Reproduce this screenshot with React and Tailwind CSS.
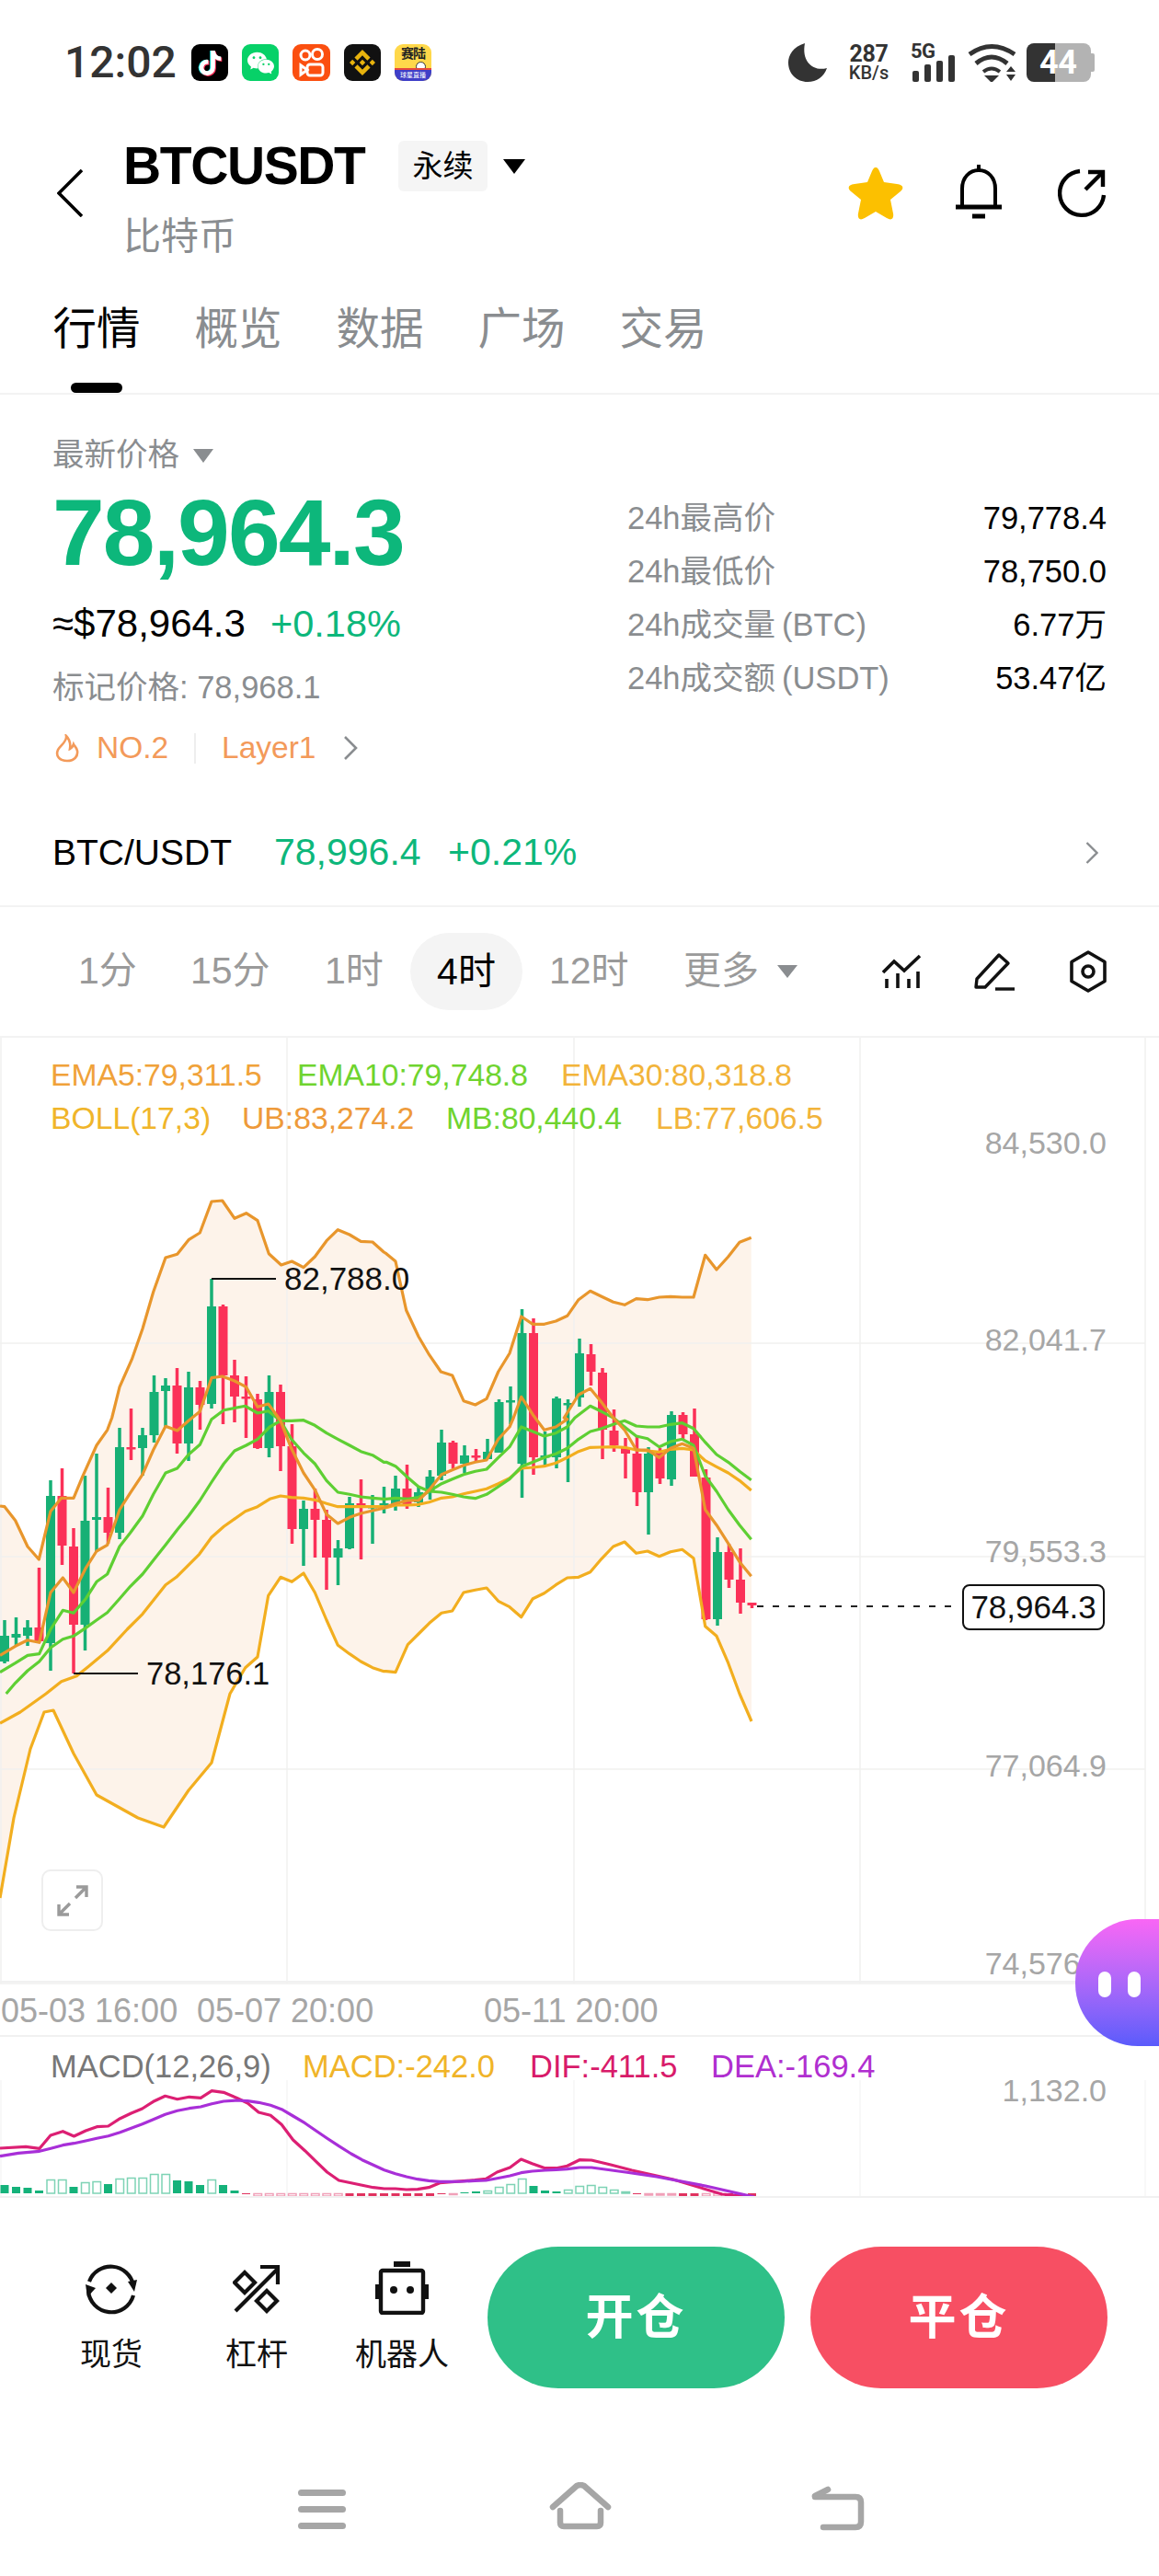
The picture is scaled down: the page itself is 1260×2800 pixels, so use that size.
import React from 'react';
import { SiWechat, SiBinance } from 'react-icons/si';
import { FaTiktok } from 'react-icons/fa';

const pts = (ox, oy, a) => { const r = []; for (let i = 0; i < a.length; i += 2) r.push([ox + a[i] / 3, oy + a[i + 1] / 3]); return r; };
const Z5 = a => pts(0, 1240, a), Z6 = a => pts(420, 1240, a), Z7 = a => pts(0, 1540, a), Z8 = a => pts(420, 1540, a);
const P = a => a.map(p => p[0].toFixed(1) + ',' + p[1].toFixed(1)).join(' ');

const UB = [
  ...Z7([0,288,15,290,50,335,90,420,127,462,165,305,200,262,240,262,270,190,315,90,350,40,365,0]),
  ...Z5([390,800,430,710,465,610,500,490,540,378,578,367,615,320,652,297,690,195,725,192,765,250,803,233,840,257,877,365,917,402,952,390,990,410,1027,375,1065,323,1102,287,1140,303,1177,325,1215,327,1252,360]),
  ...Z6([0,365,30,390,65,550,105,635,140,695,178,750,215,762,252,845,290,858,327,838,365,750,402,690,440,570,478,595,515,595,553,585,590,568,627,515,665,487,702,505,740,523,777,532,815,512,852,515,890,507,927,505,965,507,1002,507,1040,370,1077,417,1115,375,1152,328,1190,313]),
];
const LB = [
  [0,2062],[15,1975],[33,1900],[48,1860],[58,1858],[80,1905],[105,1950],[150,1975],[178,1985],[205,1945],[230,1915],
  ...Z7([750,900,800,815,840,780,875,580,915,520,952,535,990,507,1027,570,1065,660,1102,742,1140,770,1177,795,1215,815,1252,827]),
  ...Z8([0,827,30,830,70,740,105,705,140,670,180,637,215,630,252,570,290,562,327,555,365,598,402,617,440,650,478,590,515,572,553,545,590,522,627,520,665,503,702,460,740,420,777,405,815,442,852,435,890,452,927,437,965,430,1002,458,1040,680,1077,712,1115,800]),
  [804,1840],[817,1870],
];
const EMA30 = [
  [0,1872],[22,1860],
  ...Z7([150,900,200,860,250,842,290,810,350,760,415,690,465,640,540,545,575,520,650,445,690,390,730,355,800,305,840,290,880,265,915,255,950,260,990,262,1027,268,1065,280,1102,290,1140,290,1215,290,1252,290]),
  ...Z8([0,293,30,285,70,285,105,283,140,275,180,262,215,258,252,248,290,240,327,232,365,215,402,197,440,165,478,162,515,158,553,148,590,130,627,110,665,97,702,96,740,95,777,97,815,105,852,108,890,112,927,103,965,100,1002,105,1040,140,1077,160,1115,180,1152,205,1190,237]),
];
const G1 = [
  ...Z7([0,830,50,800,90,775,128,770,165,690,205,628,240,637,280,590,315,535,350,510,390,420,425,375,465,320,500,250,540,180,578,165,615,120,652,88,690,5]),
  ...Z5([730,875,800,862,840,885,875,878]),
  ...Z7([915,10,950,70,990,115,1027,150,1065,205,1102,243,1140,250,1177,258,1215,262,1252,265]),
  ...Z8([0,265,30,262,70,265,105,260,140,240,180,215,215,200,252,185,290,175,327,168,365,130,402,95,440,30,478,45,515,60,553,50,590,30]),
  ...Z6([615,900,665,862,702,880]),
  ...Z8([740,0,777,30,815,60,852,68,890,95,927,78,965,70,1002,90,1040,190,1077,240,1115,300,1152,350,1190,397]),
];
const G2 = [
  ...Z7([20,900,50,865,90,825,128,795,165,750,205,722,240,712,280,685,315,660,350,635,390,590,425,550,465,510,500,465,540,415,578,365,615,320,652,270,690,210,730,150,765,108,803,90,840,70,880,30,915,10,950,10,990,8,1027,25,1065,50,1102,70,1140,90,1177,110,1215,122,1252,145]),
  ...Z8([0,145,30,158,70,195,105,225,140,240,180,243,215,250,252,258,290,263,327,250,365,225,402,200,440,160,478,145,515,130,553,118,590,100,627,70,665,45,702,35,740,22,777,10,815,27,852,30,890,30,927,22,965,17,1002,35,1040,80,1077,120,1115,145,1152,175,1190,203]),
];
const EMA5 = [
  ...Z7([0,775,50,745,90,725,128,733,165,570,205,522,240,570,280,490,315,435,350,415,390,300,425,245,465,185,500,105,540,28,578,42,615,10]),
  ...Z5([652,880,690,770,725,765,765,780,803,800,840,865,875,855]),
  ...Z7([915,10,950,100,990,180,1027,235,1065,315,1102,345,1140,325,1177,312,1215,303,1252,295]),
  ...Z8([0,290,30,280,70,270,105,270,140,235,180,185,215,170,252,155,290,145,327,138,365,70,402,30]),
  ...Z6([415,900,440,832,478,890]),
  ...Z8([515,40,553,30,590,5]),
  ...Z6([580,900,627,825,665,805,702,850]),
  ...Z8([740,0,777,40,815,105,852,105,890,130,927,100,965,85,1002,100,1040,300,1077,350,1115,410,1152,470,1190,517]),
];
const G = '#17b075', R = '#fb3158';
const CANDLES = [
  [0,G,1760,1807,1777,1805],[1,G,1757,1788,1775,1779],[2,G,1760,1788,1768,1777],[3,R,1703,1785,1768,1783],[4,G,1608,1815,1625,1785],[5,R,1595,1700,1625,1679],[6,R,1660,1818,1680,1765],[7,G,1603,1793,1652,1765],[8,G,1579,1685,1648,1651],[9,R,1616,1677,1648,1665],[10,G,1551,1672,1572,1665],[11,R,1530,1586,1572,1574],[12,G,1551,1603,1559,1573],[13,G,1494,1567,1512,1559],[14,G,1497,1550,1505,1511],[15,R,1486,1579,1505,1568],[16,G,1490,1587,1507,1568],[17,R,1500,1553,1507,1526],[18,G,1389,1530,1419,1525],[19,R,1417,1547,1419,1494],[20,R,1477,1545,1494,1517],[21,R,1495,1562,1517,1518],[22,R,1514,1574,1520,1573],[23,G,1494,1583,1512,1573],[24,R,1504,1598,1512,1571],[25,R,1547,1677,1571,1661],[26,G,1630,1701,1639,1661],[27,R,1617,1692,1639,1651],[28,R,1640,1727,1651,1692],[29,G,1673,1722,1682,1692],[30,G,1626,1683,1633,1682],[31,R,1607,1694,1633,1636],[32,G,1624,1677,1636,1637],[33,G,1615,1644,1633,1635],[34,G,1603,1641,1617,1634],[35,R,1591,1639,1617,1634],[36,G,1615,1637,1621,1632],[37,G,1597,1629,1604,1620],[38,G,1553,1608,1567,1603],[39,R,1565,1595,1567,1590],[40,G,1570,1600,1581,1590],[41,R,1574,1587,1581,1583],[42,G,1563,1585,1577,1585],[43,G,1520,1578,1523,1578],[44,G,1506,1547,1521,1522],[45,G,1422,1627,1448,1590],[46,R,1432,1602,1448,1583],[47,G,1555,1592,1581,1583],[48,G,1517,1595,1519,1583],[49,G,1520,1610,1524,1525],[50,G,1454,1528,1470,1518],[51,R,1460,1505,1471,1490],[52,R,1486,1585,1491,1553],[53,R,1531,1577,1554,1570],[54,R,1562,1606,1573,1579],[55,R,1560,1636,1579,1621],[56,G,1572,1667,1579,1621],[57,R,1573,1612,1578,1606],[58,G,1533,1614,1537,1607],[59,R,1534,1565,1537,1558],[60,R,1530,1604,1558,1604],[61,R,1596,1760,1605,1759],[62,G,1670,1766,1686,1759],[63,R,1677,1725,1686,1716],[64,R,1682,1753,1716,1741],[65,R,1741,1747,1741,1744],
];
const X = i => 5 + 12.5 * i;
const M = a => pts(0, 2140, a).map((p, i) => [a[i * 2] / 2.489, p[1]]);
const DIF = [...M([0,582,70,577,107,583,137,540,170,527,200,543,232,525,262,512,293,510,325,485,355,468,385,453,415,430,447,412,480,422,512,415,543,418,573,395,605,400,640,418,670,435,700,465,732,475,762,505,793,555,825,590,855,625,885,660,917,687,950,695,980,703,1010,710,1040,714,1070,714,1100,717,1130,716,1160,710,1190,695,1222,692,1255,689,1285,686,1315,682,1345,660,1380,645,1410,618,1440,632,1475,647,1505,647,1535,640,1568,620]),[643,2347],[664,2352],[687,2358],[732,2368],[785,2384],[820,2387]];
const DEA = [...M([0,608,50,598,107,592,140,582,170,572,200,566,232,558,262,550,293,542,325,530,355,517,385,503,415,488,447,472,480,460,512,452,543,447,573,437,605,429,640,426,670,428,700,433,732,442,762,455,793,477,825,500,855,525,885,550,917,575,950,600,980,620,1010,637,1040,653,1070,665,1100,675,1130,683,1160,688,1190,691,1222,691,1255,690,1285,688,1315,687,1345,680,1380,672,1410,662,1440,657,1475,654,1505,652,1535,650,1568,645]),[643,2355],[680,2360],[714,2365],[767,2375],[820,2387]];
// [height, filled] positive = above the baseline (green), negative = below (red)
const BARS = [[9,1],[7,1],[6,1],[3,1],[15,0],[15,0],[7,1],[12,0],[13,0],[10,1],[16,0],[17,0],[17,0],[21,0],[21,0],[14,1],[13,1],[9,1],[15,0],[9,1],[3,1],[-1,1],[-3,0],[-3,0],[-3,0],[-3,0],[-3,0],[-3,0],[-3,0],[-3,0],[-3,1],[-3,1],[-3,1],[-3,1],[-3,1],[-3,1],[-3,1],[-3,1],[-1,1],[-1,0],[1,1],[2,1],[3,0],[7,0],[10,0],[16,0],[8,1],[3,1],[2,1],[4,0],[8,0],[9,0],[7,0],[4,0],[2,0],[-1,1],[-2,0],[-2,0],[-2,0],[-3,1],[-3,1],[-3,0],[-3,0],[-3,1],[-3,1],[-3,1]];
const GRID_Y = [1459, 1691, 1922, 2155];
const GRID_X = [1, 312, 624, 935, 1245];
const AXIS = [['84,530.0', 1241], ['82,041.7', 1455], ['79,553.3', 1685], ['77,064.9', 1918], ['74,576.5', 2133]];

function Chart() {
  return (
    <svg className="absolute inset-0" width="1260" height="1261" viewBox="0 1127 1260 1261">
      <polygon points={P([...UB, ...[...LB].reverse()])} fill="#fdf3ea" />
      {GRID_Y.map(y => <line key={y} x1="0" x2="1245" y1={y} y2={y} stroke="#f1f0ef" strokeWidth="1.5" />)}
      {GRID_X.map(x => <line key={x} x1={x} x2={x} y1="1127" y2="2155" stroke="#f1f0ef" strokeWidth="1.5" />)}
      {[1, 312, 624, 935, 1245].map(x => <line key={x} x1={x} x2={x} y1="2260" y2="2386" stroke="#f6f6f6" strokeWidth="1.5" />)}
      {CANDLES.map(([i, c, wt, wb, bt, bb]) => (
        <g key={i} fill={c}>
          <rect x={X(i) - 1.75} y={wt} width="3.5" height={wb - wt} />
          <rect x={X(i) - 5} y={bt} width="10" height={Math.max(2.5, bb - bt)} />
        </g>
      ))}
      <g fill="none" strokeWidth="3.2" strokeLinejoin="round">
        <polyline points={P(UB)} stroke="#e8962c" />
        <polyline points={P(LB)} stroke="#f2ae1f" />
        <polyline points={P(EMA30)} stroke="#f2ae1f" />
        <polyline points={P(G2)} stroke="#5ecf33" />
        <polyline points={P(G1)} stroke="#5ecf33" />
        <polyline points={P(EMA5)} stroke="#e8962c" />
      </g>
      <line x1="230" x2="300" y1="1389" y2="1389" stroke="#111" strokeWidth="2" />
      <text x="309" y="1401" fontSize="35" fill="#111">82,788.0</text>
      <line x1="80" x2="150" y1="1818" y2="1818" stroke="#111" strokeWidth="2" />
      <text x="159" y="1830" fontSize="34.5" fill="#111">78,176.1</text>
      <line x1="823" x2="1043" y1="1745" y2="1745" stroke="#222" strokeWidth="2" strokeDasharray="7 10" />
      <rect x="1047" y="1722" width="153" height="48" rx="7" fill="#fff" stroke="#111" strokeWidth="2" />
      <text x="1123.5" y="1758" fontSize="35" fill="#111" textAnchor="middle">78,964.3</text>
      {AXIS.map(([t, y]) => <text key={t} x="1203" y={y + 12} fontSize="34" fill="#a6a6a6" textAnchor="end">{t}</text>)}
      <line x1="0" x2="1260" y1="2153" y2="2153" stroke="#f1f1f1" strokeWidth="2" />
      {[['05-03 16:00', 1], ['05-07 20:00', 214], ['05-11 20:00', 526]].map(([t, x]) => <text key={t} x={x} y="2197" fontSize="36" fill="#a6a6a6">{t}</text>)}
      <line x1="0" x2="1260" y1="2212" y2="2212" stroke="#f1f1f1" strokeWidth="2" />
      <text x="1203" y="2283" fontSize="34" fill="#a6a6a6" textAnchor="end">1,132.0</text>
      {BARS.map(([h, f], i) => {
        const up = h > 0, c = up ? '#15b27a' : '#e0335f', a = Math.abs(h), y = up ? 2383 - a : 2383;
        return f
          ? <rect key={i} x={X(i) - 4.5} y={y} width="9" height={a} fill={c} />
          : <rect key={i} x={X(i) - 4} y={y + 0.5} width="8.5" height={Math.max(a - 0.5, 1)} fill="none" stroke={up ? '#7ed3b5' : '#f0a0b8'} strokeWidth="1.5" />;
      })}
      <g fill="none" strokeWidth="3.2" strokeLinejoin="round">
        <polyline points={P(DIF)} stroke="#dc1f73" />
        <polyline points={P(DEA)} stroke="#a82fd8" />
      </g>
    </svg>
  );
}

const Tri = ({ c = 'border-t-black', w = 'border-x-[12px]', h = 'border-t-[16px]' }) => (
  <span className={`inline-block w-0 h-0 border-x-transparent ${w} ${h} ${c}`} />
);

function TikTok() {
  return (
    <div className="relative w-[40px] h-[40px] rounded-[9px] bg-black flex items-center justify-center">
      <FaTiktok className="absolute text-[#25f4ee] w-[25px] h-[27px] -translate-x-[1px]" />
      <FaTiktok className="absolute text-[#fe2c55] w-[25px] h-[27px] translate-x-[1px] translate-y-[1px]" />
      <FaTiktok className="absolute text-white w-[25px] h-[27px]" />
    </div>
  );
}
function Kuaishou() {
  return (
    <div className="w-[41px] h-[40px] rounded-[9px] bg-[#fb4f10] flex items-center justify-center">
      <svg width="28" height="32" viewBox="0 0 28 32" fill="none" stroke="#fff" strokeWidth="3">
        <circle cx="7" cy="8" r="5" /><circle cx="20" cy="7" r="5.5" />
        <rect x="9" y="18" width="17" height="12" rx="3" />
        <path d="M9 24 L2 19 V29 Z" />
      </svg>
    </div>
  );
}
function Fifth() {
  return (
    <div className="relative w-[40px] h-[40px] rounded-[9px] overflow-hidden bg-[#ffd84a] flex flex-col items-center">
      <span className="text-[14px] leading-[17px] font-bold text-[#222] mt-[2px] tracking-[-1px]">赛陆</span>
      <span className="absolute left-[23px] top-[19px] w-[11px] h-[11px] rounded-full bg-white border border-[#333]" />
      <div className="absolute bottom-0 left-0 right-0 h-[12px] bg-[#3f3fc8] text-[7px] leading-[12px] text-white text-center">球星直播</div>
      <div className="absolute bottom-[12px] left-0 right-0 h-[2px] bg-[#e8483c]" />
    </div>
  );
}
function Status() {
  return (
    <div className="h-[136px] pt-[47px] pl-[70px] pr-[70px] flex items-start justify-between">
      <div className="flex items-center h-[42px]">
        <span className="font-['Roboto',sans-serif] font-medium text-[48px] leading-[42px] text-[#333] w-[138px]">12:02</span>
        <div className="flex gap-[15px]">
          <TikTok />
          <div className="w-[40px] h-[40px] rounded-[9px] bg-[#07d168] flex items-center justify-center"><SiWechat className="text-white w-[29px] h-[29px]" /></div>
          <Kuaishou />
          <div className="w-[40px] h-[40px] rounded-[9px] bg-[#111] flex items-center justify-center"><SiBinance className="text-[#e8b30d] w-[28px] h-[28px]" /></div>
          <Fifth />
        </div>
      </div>
      <div className="flex items-start h-[42px]">
        <svg width="42" height="42" viewBox="0 0 42 42" className="mr-[20px]"><path d="M18 0 C5 4 0 13 0 21 C0 33 9 42 21 42 C31 42 39 36 42 27 C28 31 14 21 18 0 Z" fill="#333" /></svg>
        <div className="w-[51px] mr-[20px] flex flex-col items-center font-['Roboto',sans-serif] font-bold text-[#333]">
          <span className="text-[25px] leading-[23px] tracking-[-0.3px]">287</span>
          <span className="text-[20px] leading-[19px] font-medium">KB/s</span>
        </div>
        <div className="relative w-[50px] h-[42px] mr-[12px]">
          <span className="absolute left-0 -top-[2px] font-['Roboto',sans-serif] font-bold text-[22px] leading-[22px] text-[#333] tracking-[-0.5px]">5G</span>
          <svg className="absolute inset-0" width="50" height="42" viewBox="0 0 50 42" fill="#333">
            <rect x="2" y="30" width="7" height="12" rx="2" /><rect x="15" y="23" width="7" height="19" rx="2" /><rect x="28" y="19" width="7" height="23" rx="2" /><rect x="41" y="13" width="7" height="29" rx="2" />
          </svg>
        </div>
        <svg width="54" height="42" viewBox="0 0 54 42" className="mr-[10px]" fill="none" stroke="#333" strokeWidth="5">
          <path d="M2 12 Q26 -5 51 12" /><path d="M9 22 Q26 8 43 22" /><path d="M17 31 Q26 24 35 31" strokeWidth="4" />
          <path d="M18 35 H34 L26 43 Z" fill="#333" stroke="none" /><path d="M42 31 L47 25 L52 31 Z M42 34 H52 L47 41 Z" fill="#333" stroke="none" />
        </svg>
        <div className="relative flex items-center w-[74px] h-[42px]">
          <div className="w-[31px] h-full rounded-l-[8px] bg-[#333]" />
          <div className="w-[39px] h-full rounded-r-[8px] bg-[#b3b3b3]" />
          <div className="w-[4px] h-[20px] rounded-r-[2px] bg-[#b3b3b3]" />
          <span className="absolute left-[14px] top-0 font-['Roboto',sans-serif] font-bold text-white text-[36px] leading-[42px] tracking-[-0.5px]">44</span>
        </div>
      </div>
    </div>
  );
}

function Header() {
  return (
    <div className="h-[164px] pl-[62px] pr-[58px] flex items-start">
      <svg width="28" height="52" viewBox="0 0 28 52" fill="none" stroke="#000" strokeWidth="3.6" className="mt-[48px]"><path d="M27 1 L2 26 L27 51" /></svg>
      <div className="ml-[44px] flex flex-col">
        <div className="flex items-center h-[55px] mt-[17px]">
          <span className="font-bold text-[57px] leading-[55px] tracking-[-1.4px] text-black w-[299px]">BTCUSDT</span>
          <span className="w-[97px] h-[55px] rounded-[6px] bg-[#f5f5f5] text-center text-[33px] leading-[55px] text-black">永续</span>
          <span className="ml-[17px] flex"><Tri /></span>
        </div>
        <span className="text-[41px] leading-[46px] mt-[26px] text-[#8a8d90]">比特币</span>
      </div>
      <div className="ml-auto flex items-start mt-[44px]">
        <svg width="60" height="58" viewBox="0 0 60 58" className="mt-[1px]"><path d="M30 1 C32 1 33 3 34 5 L39 17 L53 19 C60 20 61 23 57 27 L46 36 L49 51 C50 57 47 59 42 56 L30 49 L18 56 C13 59 10 57 11 51 L14 36 L3 27 C-1 23 0 20 7 19 L21 17 L26 5 C27 3 28 1 30 1 Z" fill="#fcc000" /></svg>
        <svg width="50" height="60" viewBox="0 0 50 60" className="ml-[57px] -mt-[2px]" fill="none" stroke="#000" strokeWidth="4">
          <path d="M25 1 V7" /><path d="M7 46 V27 C7 15 15 7 25 7 C35 7 43 15 43 27 V46" /><path d="M0 47 H50" strokeWidth="5" /><path d="M18 57 H32" strokeWidth="5" />
        </svg>
        <svg width="52" height="54" viewBox="0 0 52 54" className="ml-[61px] mt-[3px]" fill="none" stroke="#000" strokeWidth="4.4">
          <path d="M24 3 A24 24 0 1 0 50 29" /><path d="M30 23 L48 5" /><path d="M33 4 H49 V20" />
        </svg>
      </div>
    </div>
  );
}

function Tabs() {
  const t = ['行情', '概览', '数据', '广场', '交易'];
  return (
    <div className="h-[129px] pl-[59px] flex items-start gap-[62px] border-b-2 border-[#f3f3f3]">
      {t.map((s, i) => (
        <div key={s} className="w-[92px] h-[127px] flex flex-col items-center">
          <span className={`text-[47.5px] leading-[54px] mt-[31px] whitespace-nowrap ${i === 0 ? 'text-black' : 'text-[#8a8d90]'}`}>{s}</span>
          {i === 0 && <span className="w-[56px] h-[11px] mt-[31px] rounded-full bg-black" />}
        </div>
      ))}
    </div>
  );
}

function Stats() {
  const rows = [['24h最高价', '79,778.4'], ['24h最低价', '78,750.0'], ['24h成交量\u2009(BTC)', '6.77万'], ['24h成交额\u2009(USDT)', '53.47亿']];
  return (
    <div className="h-[441px] flex">
      <div className="w-[682px] pl-[57px] flex flex-col items-start">
        <div className="h-[40px] mt-[46px] flex items-center text-[34.5px] text-[#8a8d90]">
          最新价格<span className="ml-[15px] flex"><Tri c="border-t-[#8a8d90]" w="border-x-[11px]" h="border-t-[15px]" /></span>
        </div>
        <div className="h-[100px] mt-[14px] font-bold text-[102px] leading-[100px] tracking-[-1.9px] text-[#0db77b]">78,964.3</div>
        <div className="h-[50px] mt-[24px] flex items-center text-[42px] leading-[50px]">
          <span className="text-black w-[238px]">≈$78,964.3</span>
          <span className="text-[#0db77b] text-[41.5px] -ml-[1px]">+0.18%</span>
        </div>
        <div className="h-[40px] mt-[24px] text-[34.5px] leading-[40px] text-[#8a8d90]">标记价格: 78,968.1</div>
        <div className="h-[40px] mt-[26px] flex items-center text-[33.5px] text-[#f39a5a]">
          <svg width="26" height="31" viewBox="0 0 26 31" fill="none" stroke="#f39a5a" strokeWidth="2.6" className="ml-[3px]"><path d="M12 2 C13 8 6 12 3 17 C0 24 5 29 13 29 C21 29 25 24 24 18 C23 14 21 13 20 11 C19 14 18 15 16 16 C17 10 15 5 12 2 Z" /></svg>
          <span className="ml-[19px] w-[106px]">NO.2</span>
          <span className="w-[2px] h-[33px] bg-[#eeeeee]" />
          <span className="ml-[28px] w-[132px] whitespace-nowrap">Layer1</span>
          <svg width="16" height="26" viewBox="0 0 16 26" fill="none" stroke="#8a8d90" strokeWidth="2.6"><path d="M2 1 L14 13 L2 25" /></svg>
        </div>
      </div>
      <div className="flex-1 pr-[57px] pt-[106px] flex flex-col">
        {rows.map(([a, b]) => (
          <div key={a} className="h-[58px] flex items-center justify-between text-[34.5px]">
            <span className="text-[#8a8d90]">{a}</span><span className="text-black">{b}</span>
          </div>
        ))}
      </div>
    </div>
  );
}

function Pair() {
  return (
    <div className="h-[116px] pl-[57px] pr-[66px] flex items-center border-b-2 border-[#f3f3f3] text-[41px]">
      <span className="text-black w-[241px] text-[39px]">BTC/USDT</span>
      <span className="text-[#0db77b] w-[189px]">78,996.4</span>
      <span className="text-[#0db77b]">+0.21%</span>
      <svg width="14" height="24" viewBox="0 0 14 24" fill="none" stroke="#8a8d90" strokeWidth="2.4" className="ml-auto"><path d="M1.5 1 L12.5 12 L1.5 23" /></svg>
    </div>
  );
}

function Intervals() {
  return (
    <div className="h-[142px] flex items-center pl-[85px] text-[41px] text-[#9a9a9a] border-b-2 border-[#f3f3f3] whitespace-nowrap">
      <span className="w-[122px]">1分</span>
      <span className="w-[146px]">15分</span>
      <span className="w-[93px]">1时</span>
      <span className="w-[122px] h-[84px] rounded-full bg-[#f4f4f4] text-black text-center leading-[84px]">4时</span>
      <span className="ml-[29px] w-[146px]">12时</span>
      <span className="w-[102px]">更多</span>
      <span className="flex"><Tri c="border-t-[#8a8d90]" w="border-x-[11px]" h="border-t-[14px]" /></span>
      <svg width="44" height="40" viewBox="0 0 44 40" fill="none" stroke="#111" strokeWidth="3.6" className="ml-[91px]">
        <path d="M2 21 L14 9 L25 19 L42 3" /><path d="M6 38 V28 M18 38 V22 M30 38 V28 M40 38 V20" />
      </svg>
      <svg width="46" height="44" viewBox="0 0 46 44" fill="none" stroke="#111" strokeWidth="3.4" className="ml-[56px]">
        <path d="M4 30 L28 4 L38 13 L13 39 L3 39 Z" strokeLinejoin="round" /><path d="M24 41 H45" />
      </svg>
      <svg width="42" height="46" viewBox="0 0 42 46" fill="none" stroke="#111" strokeWidth="3.6" className="ml-[58px]">
        <path d="M21 2 L39 12.5 V33.5 L21 44 L3 33.5 V12.5 Z" strokeLinejoin="round" /><circle cx="21" cy="23" r="6" />
      </svg>
    </div>
  );
}

function ChartArea() {
  return (
    <div className="relative h-[1259px] overflow-hidden">
      <Chart />
      <div className="relative pl-[55px] pt-[17px] text-[33.7px] leading-[47px] whitespace-nowrap">
        <div className="flex">
          <span className="w-[268px] text-[#f0a23a]">EMA5:79,311.5</span>
          <span className="w-[287px] text-[#6fd42f]">EMA10:79,748.8</span>
          <span className="text-[#f2b43a]">EMA30:80,318.8</span>
        </div>
        <div className="flex">
          <span className="w-[208px] text-[#f0b52a]">BOLL(17,3)</span>
          <span className="w-[222px] text-[#ee9a3a]">UB:83,274.2</span>
          <span className="w-[228px] text-[#6fd42f]">MB:80,440.4</span>
          <span className="text-[#f2b43a]">LB:77,606.5</span>
        </div>
        <div className="flex mt-[985px] leading-[44px] text-[34.5px]">
          <span className="w-[274px] text-[#777]">MACD(12,26,9)</span>
          <span className="w-[247px] text-[#f0b428]">MACD:-242.0</span>
          <span className="w-[197px] text-[#d81b6a]">DIF:-411.5</span>
          <span className="text-[#b02fd0]">DEA:-169.4</span>
        </div>
      </div>
      <div className="absolute left-[45px] top-[904px] w-[67px] h-[67px] rounded-[10px] border-2 border-[#eee] bg-white flex items-center justify-center">
        <svg width="34" height="34" viewBox="0 0 34 34" fill="none" stroke="#9a9a9a" strokeWidth="3.4"><path d="M20 14 L32 2 M21 2 H32 V13 M14 20 L2 32 M2 21 V32 H13" /></svg>
      </div>
      <div className="absolute left-[1169px] top-[958px] w-[91px] h-[138px] rounded-l-[68px] bg-gradient-to-b from-[#f966f5] to-[#5a5bfb] flex items-center gap-[18px] pl-[25px] pt-[4px]">
        <span className="w-[14px] h-[28px] rounded-full bg-white" />
        <span className="w-[14px] h-[28px] rounded-full bg-white" />
      </div>
    </div>
  );
}

function Actions() {
  return (
    <div className="h-[412px] border-t-2 border-[#f1f1f1]">
      <div className="flex items-start h-[296px] pt-[53px]">
        <div className="w-[530px] pl-[87px] flex items-start pt-[16px] text-[34px] text-[#111]">
          <div className="w-[68px] flex flex-col items-center">
            <svg width="58" height="58" viewBox="0 0 58 58" fill="none" stroke="#111" strokeWidth="4.2">
              <path d="M5 22 A25 25 0 0 1 53 26" /><path d="M47 22 L54 33 L57 20 Z" fill="#111" strokeWidth="1" stroke="none" />
              <path d="M53 37 A25 25 0 0 1 4 32" /><path d="M1 25 L3 39 L12 29 Z" fill="#111" stroke="none" />
              <path d="M29 23 L35 29 L29 35 L23 29 Z" fill="#111" stroke="none" />
            </svg>
            <span className="mt-[23px] leading-[40px] whitespace-nowrap">现货</span>
          </div>
          <div className="ml-[90px] w-[68px] flex flex-col items-center">
            <svg width="52" height="58" viewBox="0 0 52 58" fill="none" stroke="#111" strokeWidth="4.2">
              <path d="M3 54 L49 8" /><path d="M30 6 H49 V25" />
              <path d="M13 12 L24 23 L13 34 L2 23 Z" /><path d="M37 32 L48 43 L37 54 L26 43 Z" />
            </svg>
            <span className="mt-[23px] leading-[40px] whitespace-nowrap">杠杆</span>
          </div>
          <div className="ml-[72px] w-[104px] flex flex-col items-center">
            <svg width="58" height="58" viewBox="0 0 58 58" fill="#111">
              <rect x="20" y="0" width="18" height="6" />
              <rect x="6" y="10" width="46" height="46" rx="2" fill="none" stroke="#111" strokeWidth="4.4" />
              <rect x="0" y="25" width="5" height="16" /><rect x="53" y="25" width="5" height="16" />
              <circle cx="20" cy="31" r="4" /><circle cx="38" cy="31" r="4" />
            </svg>
            <span className="mt-[23px] leading-[40px] whitespace-nowrap">机器人</span>
          </div>
        </div>
        <div className="w-[323px] h-[154px] rounded-full bg-[#2fc088] flex items-center justify-center text-white font-bold text-[52px] tracking-[3px]">开仓</div>
        <div className="ml-[28px] w-[323px] h-[154px] rounded-full bg-[#f74f63] flex items-center justify-center text-white font-bold text-[52px] tracking-[3px]">平仓</div>
      </div>
      <div className="flex items-start pl-[324px] pt-[21px]">
        <div className="w-[52px] h-[43px] flex flex-col justify-between">
          <span className="h-[7px] rounded-full bg-[#a6a6a6]" /><span className="h-[7px] rounded-full bg-[#a6a6a6]" /><span className="h-[7px] rounded-full bg-[#a6a6a6]" />
        </div>
        <svg width="68" height="52" viewBox="0 0 68 52" fill="none" stroke="#a6a6a6" strokeWidth="6.5" strokeLinecap="round" strokeLinejoin="round" className="ml-[221px] -mt-[8px]">
          <path d="M4 27 L30 4 Q34 2 38 4 L64 27" /><path d="M12 31 V44 Q12 48 16 48 H52 Q56 48 56 44 V31" />
        </svg>
        <svg width="58" height="50" viewBox="0 0 58 50" fill="none" stroke="#a6a6a6" strokeWidth="6.5" strokeLinecap="round" strokeLinejoin="round" className="ml-[217px] -mt-[5px]">
          <path d="M4 12 L18 5" /><path d="M4 13 H48 Q54 13 54 19 V40 Q54 46 48 46 H13" />
        </svg>
      </div>
    </div>
  );
}

export default function App() {
  return (
    <div className="relative w-[1260px] h-[2800px] overflow-hidden bg-white font-['Liberation_Sans','Noto_Sans_CJK_SC',sans-serif]">
      <Status />
      <Header />
      <Tabs />
      <Stats />
      <Pair />
      <Intervals />
      <ChartArea />
      <Actions />
    </div>
  );
}
